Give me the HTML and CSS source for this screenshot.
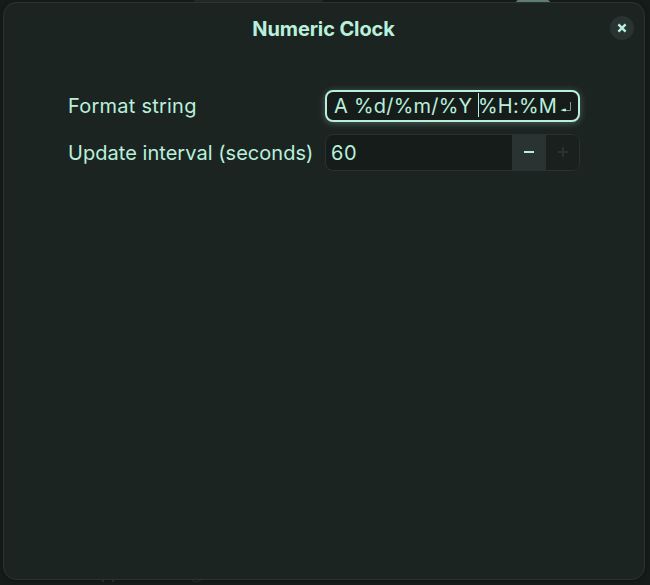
FILE: index.html
```html
<!DOCTYPE html>
<html lang="en">
<head>
<meta charset="utf-8">
<title>Numeric Clock</title>
<link rel="stylesheet" href="styles.css">
</head>
<body>
<div class="behind tab"></div>
<div class="behind knob"></div>
<div class="behind stem-a"></div>
<div class="behind stem-b"></div>
<div class="behind hook"></div>
<main class="dialog">
  <header class="titlebar">
    <h1 class="title">Numeric Clock</h1>
    <button class="close" aria-label="Close"><svg width="24" height="24" viewBox="0 0 24 24"><path d="M8.4 8.4l7.2 7.2M15.6 8.4l-7.2 7.2"/></svg></button>
  </header>
  <section class="form">
    <span class="label">Format string</span>
    <div class="entry">
      <span class="before">A %d/%m/%Y </span><i class="caret"></i><span class="after">%H:%M</span>
      <svg class="enter" width="12" height="12" viewBox="0 0 12 12"><path class="line" d="M10.5 1v8.5H3"/><path class="tip" d="M.5 9.2L4 7.8h2v2.4H4z"/></svg>
    </div>
    <span class="label long">Update interval (seconds)</span>
    <div class="spin">
      <span class="value">60</span>
      <button class="step minus" aria-label="Decrease"><svg width="10" height="10"><path d="M0 5h10"/></svg></button>
      <button class="step plus" aria-label="Increase"><svg width="10" height="10"><path d="M0 5h10M5 0v10"/></svg></button>
    </div>
  </section>
</main>
</body>
</html>
```

FILE: styles.css
```css
* { box-sizing: border-box; }
body {
  margin: 0;
  width: 650px;
  height: 585px;
  padding: 2px 5px 5px 3px;
  overflow: hidden;
  position: relative;
  background: #161c1a;
  color: #b9f0dc;
  font-family: Inter, sans-serif;
}
button { border: 0; padding: 0; margin: 0; color: inherit; display: flex; align-items: center; justify-content: center; }
svg { display: block; fill: none; stroke: currentColor; }

/* parts of the desktop that peek out around the dialog */
.behind { position: absolute; }
.tab { left: 194px; top: 0; width: 129px; height: 3px; background: #232b28; }
.knob { left: 508px; top: -5px; width: 50px; height: 50px; border-radius: 50%; background: #68867b; }
.stem-a, .stem-b { top: 578px; width: 2px; height: 4px; background: #2c3532; }
.stem-a { left: 102px; }
.stem-b { left: 112px; }
.hook { left: 191px; top: 573px; width: 11px; height: 9px; border: 1px solid #2c3532; border-radius: 5px; }

.dialog {
  position: relative;
  width: 642px;
  height: 578px;
  background: #1c2422;
  border: 1px solid #2b3431;
  border-radius: 13px;
  box-shadow: 0 1px 5px rgba(0, 0, 0, .35);
}
.titlebar {
  display: grid;
  grid-template-columns: 24px 1fr 24px;
  align-items: center;
  height: 50px;
  padding: 0 10px;
}
.title {
  grid-column: 2;
  margin: 1px 1px 0 0;
  text-align: center;
  font-size: 20px;
  line-height: 24px;
  letter-spacing: -.12px;
  font-weight: 700;
}
.close { width: 24px; height: 24px; border-radius: 50%; background: #293331; }
.close svg { stroke-width: 2.4; }

.form {
  display: grid;
  grid-template-columns: 245px 255px;
  grid-template-rows: 32px 37px;
  gap: 12px;
  align-items: center;
  margin: 37px 0 0 64px;
}
.label, .entry, .value { font-size: 20px; line-height: 24px; letter-spacing: .23px; white-space: pre; }
.label.long { letter-spacing: .04px; }
.entry {
  display: flex;
  align-items: center;
  height: 32px;
  padding-left: 7px;
  border: 2px solid #b9f0dc;
  border-radius: 8px;
  background: #161c1a;
  box-shadow: 0 1px 7px rgba(185, 240, 220, .3);
}
.before { width: 144px; }
.caret { width: 1px; height: 24px; background: #b9f0dc; margin-top: -2px; }
.after { width: 80px; margin-left: -1px; }
.enter { margin: 1px 0 0 2px; }
.enter .line { stroke: #7b9c90; stroke-width: 1; }
.enter .tip { fill: #b9f0dc; stroke: none; }
.spin {
  display: flex;
  height: 37px;
  border: 1px solid #29322f;
  border-radius: 8px;
  overflow: hidden;
  background: #161c1a;
}
.value { flex: 1; padding-left: 5px; line-height: 36px; letter-spacing: .5px; }
.step { width: 34px; padding-bottom: 1px; }
.step svg { stroke-width: 2; }
.minus { background: #293331; }
.plus { width: 33px; background: #19201e; color: #29322f; }
```
